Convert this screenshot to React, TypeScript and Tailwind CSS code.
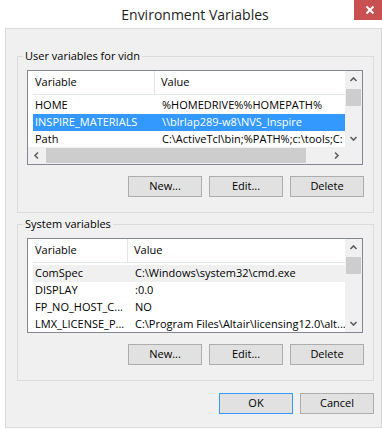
import type { ReactNode } from "react";

const FONT = "font-['Segoe_UI','Open_Sans',sans-serif]";

type Row = { name: string; value: string; state?: "selected" | "hover" };

function Chevron({ dir }: { dir: "up" | "down" | "left" | "right" }) {
  const pts = {
    up: "1.5,6 4.5,3 7.5,6",
    down: "1.5,3 4.5,6 7.5,3",
    left: "6,1.5 3,4.5 6,7.5",
    right: "3,1.5 6,4.5 3,7.5",
  }[dir];
  return (
    <svg width="9" height="9" viewBox="0 0 9 9">
      <polyline points={pts} fill="none" stroke="#606060" strokeWidth="1.6" />
    </svg>
  );
}

function VScroll() {
  return (
    <div className="w-[17px] flex flex-col bg-[#f0f0f0]">
      <div className="h-[17px] flex items-center justify-center">
        <Chevron dir="up" />
      </div>
      <div className="flex-1">
        <div className="mt-[1px] mx-[1px] h-[17px] bg-[#cdcdcd]" />
      </div>
      <div className="h-[17px] flex items-center justify-center">
        <Chevron dir="down" />
      </div>
    </div>
  );
}

function HScroll() {
  return (
    <div className="h-[17px] flex bg-[#f0f0f0]">
      <div className="w-[17px] flex items-center justify-center">
        <Chevron dir="left" />
      </div>
      <div className="flex-1">
        <div className="ml-[1px] my-[1px] w-[260px] h-[15px] bg-[#cdcdcd]" />
      </div>
      <div className="w-[17px] flex items-center justify-center">
        <Chevron dir="right" />
      </div>
      <div className="w-[17px]" />
    </div>
  );
}

function ListView({
  rows,
  colWidth,
  hscroll,
}: {
  rows: Row[];
  colWidth: string;
  hscroll?: boolean;
}) {
  return (
    <div className="w-[336px] h-[95px] border border-[#828790] bg-white flex flex-col overflow-hidden">
      <div className="flex flex-1 min-h-0">
        <div className="flex-1 min-w-0 overflow-hidden pl-[5px]">
          <div className="h-[24px] flex items-center border-b border-[#e3e8ef]">
            <div className={`${colWidth} h-full flex items-center pl-[2px] border-r border-[#e5e5e5]`}>
              Variable
            </div>
            <div className="pl-[6px]">Value</div>
          </div>
          <div className="pt-[2px]">
            {rows.map((r) => (
              <div
                key={r.name}
                className={`h-[17px] flex items-center whitespace-nowrap ${
                  r.state === "selected"
                    ? "bg-[#3399ff] text-white"
                    : r.state === "hover"
                      ? "bg-[#f0f0f0]"
                      : ""
                }`}
              >
                <div className={`${colWidth} shrink-0 pl-[2px]`}>{r.name}</div>
                <div className="pl-[7px]">{r.value}</div>
              </div>
            ))}
          </div>
        </div>
        <VScroll />
      </div>
      {hscroll && <HScroll />}
    </div>
  );
}

function Button({ children, primary }: { children: ReactNode; primary?: boolean }) {
  return (
    <button
      className={`w-[74px] h-[21px] flex items-center justify-center bg-[#e1e1e1] border ${
        primary ? "border-[#3399ff]" : "border-[#adadad]"
      }`}
    >
      {children}
    </button>
  );
}

function Group({ label, children }: { label: string; children: ReactNode }) {
  return (
    <fieldset className="ml-[11px] w-[357px] border border-[#dcdcdc] px-[9px] pt-[6px] pb-[15px]">
      <legend className="-ml-[4px] px-[2px] leading-[16px]">{label}</legend>
      {children}
    </fieldset>
  );
}

function ButtonRow() {
  return (
    <div className="mt-[11px] flex justify-end gap-[7px]">
      <Button>New...</Button>
      <Button>Edit...</Button>
      <Button>Delete</Button>
    </div>
  );
}

export default function App() {
  const userRows: Row[] = [
    { name: "HOME", value: "%HOMEDRIVE%%HOMEPATH%" },
    { name: "INSPIRE_MATERIALS", value: "\\\\blrlap289-w8\\NVS_Inspire", state: "selected" },
    { name: "Path", value: "C:\\ActiveTcl\\bin;%PATH%;c:\\tools;C:" },
  ];
  const sysRows: Row[] = [
    { name: "ComSpec", value: "C:\\Windows\\system32\\cmd.exe", state: "hover" },
    { name: "DISPLAY", value: ":0.0" },
    { name: "FP_NO_HOST_C...", value: "NO" },
    { name: "LMX_LICENSE_P...", value: "C:\\Program Files\\Altair\\licensing12.0\\alt..." },
  ];

  return (
    <div className={`w-[382px] h-[430px] bg-white flex flex-col overflow-hidden text-[11px] text-black ${FONT}`}>
      <div className="h-[28px] flex items-start">
        <div className="flex-1 pl-[36px] pt-[4px] text-center text-[14px] text-[#1e1e1e]">
          Environment Variables
        </div>
        <div className="w-[28px] h-[20px] bg-[#c75050] flex items-center justify-center pl-[4px]">
          <svg width="10" height="10" viewBox="0 0 10 10">
            <path d="M1.5 1.5 L8.5 8.5 M8.5 1.5 L1.5 8.5" stroke="white" strokeWidth="2" />
          </svg>
        </div>
      </div>
      <div className="ml-[5px] w-[377px] h-[400px] border border-[#dadada] bg-[#f0f0f0] pt-[19px]">
        <Group label="User variables for vidn">
          <ListView rows={userRows} colWidth="w-[122px]" hscroll />
          <ButtonRow />
        </Group>
        <div className="mt-[3px]">
          <Group label="System variables">
            <ListView rows={sysRows} colWidth="w-[95px]" />
            <ButtonRow />
          </Group>
        </div>
        <div className="ml-[11px] w-[357px] mt-[12px] flex justify-end gap-[7px]">
          <Button primary>OK</Button>
          <Button>Cancel</Button>
        </div>
      </div>
    </div>
  );
}
